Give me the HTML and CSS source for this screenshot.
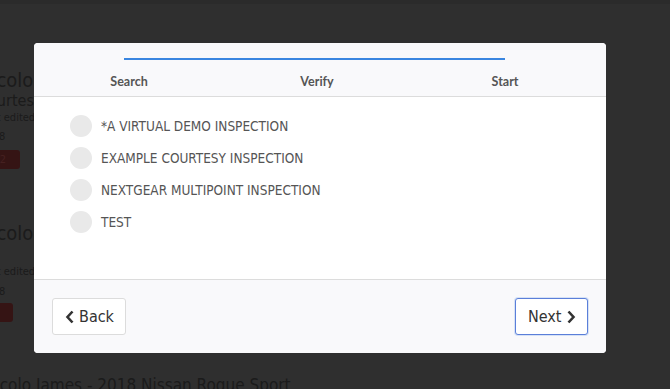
FILE: index.html
```html
<!DOCTYPE html>
<html>
<head>
<meta charset="utf-8">
<link rel="stylesheet" href="styles.css">
</head>
<body>
<div class="page">
  <div class="topbar"></div>
  <div class="card first">
    <div class="big">Nicolo</div>
    <div class="sub">Courtesy</div>
    <div class="meta">Last edited</div>
    <div class="meta year">2018</div>
    <div class="badge">2</div>
  </div>
  <div class="card second">
    <div class="big">Nicolo</div>
    <div class="meta spaced">Last edited</div>
    <div class="meta year">2018</div>
    <div class="badge narrow">1</div>
  </div>
  <div class="title">Nicolo James - 2018 Nissan Rogue Sport</div>
</div>
<div class="overlay">
  <div class="modal">
    <div class="modal-head">
      <div class="progress"></div>
      <div class="steps">
        <span>Search</span>
        <span>Verify</span>
        <span>Start</span>
      </div>
    </div>
    <div class="modal-body">
      <label class="option"><span class="radio"></span>*A VIRTUAL DEMO INSPECTION</label>
      <label class="option"><span class="radio"></span>EXAMPLE COURTESY INSPECTION</label>
      <label class="option"><span class="radio"></span>NEXTGEAR MULTIPOINT INSPECTION</label>
      <label class="option"><span class="radio"></span>TEST</label>
    </div>
    <div class="modal-foot">
      <button class="btn"><svg width="10" height="14" viewBox="0 0 10 14"><path d="M7.5 1.5 L2.5 7 L7.5 12.5" fill="none" stroke="#333" stroke-width="2.6"/></svg>Back</button>
      <button class="btn btn-next">Next<svg width="10" height="14" viewBox="0 0 10 14"><path d="M2.5 1.5 L7.5 7 L2.5 12.5" fill="none" stroke="#333" stroke-width="2.6"/></svg></button>
    </div>
  </div>
</div>
</body>
</html>
```
FILE: styles.css
```css
html, body {
  margin: 0;
  padding: 0;
}
body {
  width: 670px;
  height: 389px;
  overflow: hidden;
  background: #5e5e5e;
  font-family: "DejaVu Sans Condensed", "DejaVu Sans", sans-serif;
  position: relative;
}
.page {
  margin-left: -22px;
  color: #363636;
  height: 389px;
  overflow: hidden;
}
.topbar {
  height: 4px;
  background: #565656;
  margin-left: 22px;
}
.card.first {
  padding-top: 64px;
}
.big {
  font-size: 20px;
  line-height: 24px;
}
.sub {
  font-size: 16px;
  line-height: 18px;
}
.meta {
  font-size: 11px;
  line-height: 16px;
  margin-left: 2px;
}
.meta.year {
  margin-top: 3px;
}
.card.second .big {
  margin-top: 52px;
}
.meta.spaced {
  margin-top: 19px;
}
.card.second .meta.year {
  margin-top: 4px;
}
.badge {
  margin-top: 5px;
  margin-left: 8px;
  width: 34px;
  height: 19px;
  background: #6a2828;
  color: #8a4040;
  font-size: 11px;
  line-height: 19px;
  text-align: center;
  border-radius: 3px;
}
.badge.narrow {
  margin-top: 3px;
  width: 27px;
  text-align: left;
  text-indent: 6px;
}
.title {
  font-size: 17px;
  line-height: 24px;
  margin-top: 51px;
  margin-left: 6px;
  white-space: nowrap;
}
.overlay {
  position: absolute;
  inset: 0;
  background: rgba(0, 0, 0, 0.5);
}
.modal {
  margin: 43px 0 0 34px;
  width: 572px;
  height: 310px;
  background: #fff;
  border-radius: 4px;
  overflow: hidden;
  display: flex;
  flex-direction: column;
}
.modal-head {
  background: #f9f9fb;
  height: 54px;
  border-bottom: 1px solid #dcdcdc;
  padding-top: 15px;
  box-sizing: border-box;
}
.progress {
  margin-left: 90px;
  width: 381px;
  height: 2px;
  background: #3a86e0;
}
.steps {
  display: flex;
  justify-content: space-between;
  margin: 14px 0 0 95px;
  width: 376px;
  font-family: Lato, sans-serif;
  font-weight: bold;
  font-size: 12.5px;
  color: #555;
}
.steps span {
  width: 0;
  display: flex;
  justify-content: center;
  white-space: nowrap;
}
.modal-body {
  flex: 1;
  padding: 13px 0 0 36px;
}
.option {
  display: flex;
  align-items: center;
  height: 32px;
  font-size: 13.5px;
  color: #555;
}
.radio {
  width: 22px;
  height: 22px;
  border-radius: 50%;
  background: #e9e9e9;
  margin-right: 9px;
}
.modal-foot {
  height: 74px;
  background: #f9f9fb;
  border-top: 1px solid #dcdcdc;
  display: flex;
  justify-content: space-between;
  align-items: flex-start;
  padding: 18px 18px 0 18px;
  box-sizing: border-box;
}
.btn {
  height: 37px;
  padding: 0 11px 0 12px;
  background: #fff;
  border: 1px solid #dcdcdc;
  border-radius: 3px;
  font-family: "DejaVu Sans Condensed", "DejaVu Sans", sans-serif;
  font-size: 16px;
  color: #333;
  display: flex;
  align-items: center;
  gap: 4px;
}
.btn-next {
  width: 73px;
  border-color: #5b7fd9;
  box-shadow: 0 0 0 1px #d6e2f6;
}
```
